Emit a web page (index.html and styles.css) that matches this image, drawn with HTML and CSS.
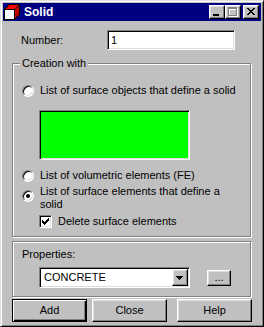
FILE: index.html
```html
<!DOCTYPE html>
<html>
<head>
    <link rel="stylesheet" href="styles.css">
</head>
<body>
    <div class="window">
        <div class="title-bar">
            <svg class="app-icon" width="16" height="16" viewBox="0 0 16 16">
                <polygon points="0.5,5.5 5.5,0.5 15.5,0.5 10.5,5.5" fill="#ff0000" stroke="#000"/>
                <polygon points="10.5,5.5 15.5,0.5 15.5,10.5 10.5,15.5" fill="#c00000" stroke="#000"/>
                <rect x="0.5" y="5.5" width="10" height="10" fill="#fff" stroke="#000"/>
            </svg>
            <div class="title">Solid</div>
            <div class="caption-btn">
                <svg width="14" height="12" viewBox="0 0 14 12"><path d="M3 8h6v2h-6z" fill="#000"/></svg>
            </div>
            <div class="caption-btn">
                <svg width="14" height="12" viewBox="0 0 14 12">
                    <path d="M3 2h9v9h-9z M4 4v6h7v-6z" fill="#fff" fill-rule="evenodd"/>
                    <path d="M2 1h9v9h-9z M3 3v6h7v-6z" fill="#808080" fill-rule="evenodd"/>
                </svg>
            </div>
            <div class="caption-btn close">
                <svg width="14" height="12" viewBox="0 0 14 12">
                    <path fill="#000" d="M3 2h2v1h-2z M9 2h2v1h-2z M4 3h2v1h-2z M8 3h2v1h-2z M5 4h2v1h-2z M7 4h2v1h-2z M6 5h2v1h-2z M5 6h2v1h-2z M7 6h2v1h-2z M4 7h2v1h-2z M8 7h2v1h-2z M3 8h2v1h-2z M9 8h2v1h-2z"/>
                </svg>
            </div>
        </div>

        <div class="content">
            <div class="number-row">
                <label>Number:</label>
                <div class="field">1</div>
            </div>

            <!-- Creation with -->
            <div class="group creation">
                <div class="legend">Creation with</div>

                <div class="option first">
                    <span class="radio"></span>
                    <span>List of surface objects that define a solid</span>
                </div>

                <div class="color-box"></div>

                <div class="option second">
                    <span class="radio"></span>
                    <span>List of volumetric elements (FE)</span>
                </div>

                <div class="option multi">
                    <span class="radio checked"></span>
                    <span>List of surface elements that define a<br>solid</span>
                </div>

                <div class="check-row">
                    <span class="checkbox">
                        <svg width="11" height="11" viewBox="0 0 11 11">
                            <path fill="#000" d="M2 4h1v3h-1z M3 5h1v3h-1z M4 6h1v3h-1z M5 5h1v3h-1z M6 4h1v3h-1z M7 3h1v3h-1z M8 2h1v3h-1z"/>
                        </svg>
                    </span>
                    <span>Delete surface elements</span>
                </div>
            </div>

            <!-- Properties -->
            <div class="group props">
                <div>Properties:</div>
                <div class="select-row">
                    <div class="select">
                        <span>CONCRETE</span>
                        <span class="arrow-btn">
                            <svg width="14" height="15" viewBox="0 0 14 15">
                                <path fill="#000" d="M3 6h7v1h-7z M4 7h5v1h-5z M5 8h3v1h-3z M6 9h1v1h-1z"/>
                            </svg>
                        </span>
                    </div>
                    <div class="btn dots">...</div>
                </div>
            </div>

            <div class="button-row">
                <div class="btn default">Add</div>
                <div class="btn close-btn">Close</div>
                <div class="btn help">Help</div>
            </div>
        </div>
    </div>
</body>
</html>
```

FILE: styles.css
```css
body {
    margin: 0;
    font-family: "Liberation Sans", Arial, sans-serif;
    font-size: 11px;
    line-height: 13px;
    color: #000;
    background: #c0c0c0;
}

.window {
    width: 264px;
    height: 327px;
    box-sizing: border-box;
    background: #c0c0c0;
    border: 1px solid;
    border-color: #dfdfdf #000 #000 #dfdfdf;
    box-shadow: inset 1px 1px #fff, inset -1px -1px #808080;
    padding: 2px;
}

/* title bar */
.title-bar {
    height: 18px;
    background: #000080;
    color: #fff;
    display: flex;
    align-items: center;
    padding: 0 2px 0 1px;
}
.app-icon {
    display: block;
}
.title {
    flex: 1;
    margin-left: 4px;
    font-weight: bold;
    font-size: 12px;
}
.caption-btn {
    width: 16px;
    height: 14px;
    box-sizing: border-box;
    background: #c0c0c0;
    border: 1px solid;
    border-color: #fff #000 #000 #fff;
    box-shadow: inset -1px -1px #808080, inset 1px 1px #dfdfdf;
}
.caption-btn svg {
    display: block;
}
.caption-btn.close {
    margin-left: 2px;
}

/* bevels */
.field, .select, .color-box, .checkbox {
    border: 1px solid;
    border-color: #808080 #fff #fff #808080;
    box-shadow: inset 1px 1px #000, inset -1px -1px #dfdfdf;
    box-sizing: border-box;
}
.btn, .arrow-btn {
    box-sizing: border-box;
    background: #c0c0c0;
    border: 1px solid;
    border-color: #fff #000 #000 #fff;
    box-shadow: inset -1px -1px #808080, inset 1px 1px #dfdfdf;
    display: flex;
    align-items: center;
    justify-content: center;
}

.content {
    padding: 9px 9px 0;
}

.number-row {
    display: flex;
    align-items: center;
    height: 20px;
    margin-bottom: 13px;
}
.number-row label {
    width: 86px;
    padding-left: 9px;
}
.field {
    width: 128px;
    height: 20px;
    background: #fff;
    padding: 0 3px;
    display: flex;
    align-items: center;
}

/* group boxes */
.group {
    border: 1px solid #808080;
    box-shadow: inset 1px 1px #fff, 1px 1px #fff;
    margin-right: 1px;
    box-sizing: border-box;
}
.legend {
    display: table;
    background: #c0c0c0;
    padding: 0 2px;
    margin: -7px 0 0 7px;
}
.creation {
    height: 174px;
}

.option {
    display: flex;
    align-items: center;
    white-space: nowrap;
    margin-left: 9px;
}
.option.first {
    margin-top: 14px;
}
.option.second {
    margin-top: 9px;
}
.option.multi {
    margin-top: 3px;
    align-items: flex-start;
}
.option.multi .radio {
    margin-top: 5px;
}
.radio {
    flex: none;
    width: 12px;
    height: 12px;
    box-sizing: border-box;
    margin-right: 6px;
    border-radius: 50%;
    background: #fff;
    border: 1px solid;
    border-color: #808080 #fff #fff #808080;
    box-shadow: inset 1px 1px #000, inset -1px -1px #dfdfdf;
    display: flex;
    align-items: center;
    justify-content: center;
}
.radio.checked::after {
    content: "";
    width: 4px;
    height: 4px;
    border-radius: 50%;
    background: #000;
}

.color-box {
    width: 151px;
    height: 50px;
    margin: 13px 0 0 26px;
    background: #00ff00;
}

.check-row {
    display: flex;
    align-items: center;
    margin: 4px 0 0 26px;
}
.checkbox {
    width: 13px;
    height: 13px;
    background: #fff;
    margin-right: 6px;
}
.checkbox svg {
    display: block;
}

.props {
    height: 56px;
    margin-top: 4px;
    padding: 6px 0 0 9px;
}
.select-row {
    display: flex;
    align-items: center;
    margin: 6px 0 0 17px;
}
.select {
    width: 151px;
    height: 21px;
    background: #fff;
    display: flex;
    align-items: center;
    padding: 1px 1px 1px 4px;
}
.select span:first-child {
    flex: 1;
}
.arrow-btn {
    width: 16px;
    height: 17px;
}
.arrow-btn svg {
    display: block;
}
.dots {
    width: 24px;
    height: 16px;
    margin-left: 17px;
}

.button-row {
    display: flex;
    margin-top: 2px;
}
.button-row .btn {
    width: 75px;
    height: 23px;
}
.btn.default {
    border: 1px solid #000;
    box-shadow: inset 1px 1px #fff, inset -1px -1px #000, inset -2px -2px #808080;
}
.btn.close-btn {
    margin-left: 5px;
}
.btn.help {
    margin-left: auto;
}
```
